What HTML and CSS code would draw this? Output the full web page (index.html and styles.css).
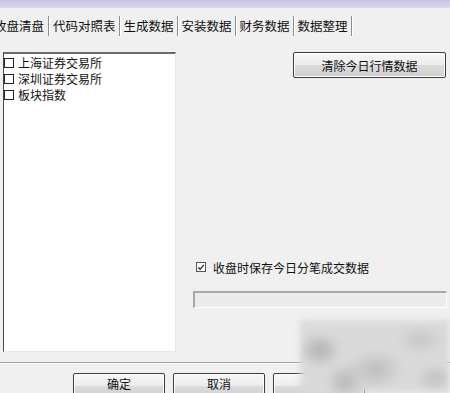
FILE: index.html
```html
<!DOCTYPE html>
<html lang="zh">
<head>
<meta charset="utf-8">
<link rel="stylesheet" href="styles.css">
</head>
<body>
<div class="window">
  <div class="titlebar"></div>
  <div class="tabbar">
    <span class="tab first">收盘清盘</span>
    <span class="tab">代码对照表</span>
    <span class="tab">生成数据</span>
    <span class="tab">安装数据</span>
    <span class="tab">财务数据</span>
    <span class="tab">数据整理</span>
  </div>
  <div class="panel">
    <div class="list">
      <div class="item"><span class="box"></span>上海证券交易所</div>
      <div class="item"><span class="box"></span>深圳证券交易所</div>
      <div class="item"><span class="box"></span>板块指数</div>
    </div>
    <div class="right">
      <button class="btn clear">清除今日行情数据</button>
      <label class="check"><span class="box checked"><svg width="9" height="9" viewBox="0 0 9 9"><path d="M1.5 4.5 L3.5 6.5 L7.5 1.5" fill="none" stroke="#222" stroke-width="1.4"/></svg></span>收盘时保存今日分笔成交数据</label>
      <div class="progress"></div>
    </div>
  </div>
  <div class="footer">
    <button class="btn foot">确定</button>
    <button class="btn foot">取消</button>
    <button class="btn foot"></button>
  </div>
  <div class="blur"></div>
</div>
</body>
</html>
```
FILE: styles.css
```css
* { box-sizing: border-box; }
html, body { margin: 0; padding: 0; }
body { background: #f0f0f0; }
.window {
  position: relative;
  width: 450px;
  height: 393px;
  overflow: hidden;
  background: #f0f0f0;
  font-family: "Noto Sans CJK SC", "Noto Sans", sans-serif;
  font-size: 12px;
  color: #111;
}
.titlebar {
  height: 8px;
  background: linear-gradient(#c9c3e2, #dcd8ee);
}
.tabbar {
  display: flex;
  align-items: center;
  height: 30px;
  margin-left: -6px;
  padding-top: 6px;
  font-size: 12.5px;
}
.tab {
  line-height: 20px;
  padding: 0 3px 0 4px;
  border-right: 1px solid #8e8e8e;
  box-shadow: 1px 0 0 #ffffff;
  white-space: nowrap;
}
.tab.first { padding-left: 0; padding-right: 4px; }
.panel {
  display: flex;
  height: 325px;
  padding: 14px 0 0 3px;
  border-bottom: 1px solid #a0a0a0;
  box-shadow: 0 1px 0 #ffffff;
}
.list {
  width: 173px;
  height: 300px;
  background: #ffffff;
  border-top: 2px solid #6a6a6a;
  border-left: 1px solid #4a4a4a;
  border-right: 1px solid #e6e6e6;
  border-bottom: 1px solid #e6e6e6;
  padding-top: 1px;
}
.item {
  display: flex;
  align-items: center;
  height: 16px;
  line-height: 16px;
  white-space: nowrap;
}
.box {
  display: inline-flex;
  align-items: center;
  justify-content: center;
  width: 10px;
  height: 10px;
  border: 1px solid #222;
  background: #fff;
  margin: 0 4px 0 0;
  flex: none;
}
.right {
  display: flex;
  flex-direction: column;
  margin-left: 17px;
  width: 254px;
}
.btn {
  font-family: inherit;
  font-size: 12px;
  color: #111;
  border: 1px solid #3c3c3c;
  border-radius: 2px;
  background: linear-gradient(#f7f7f7 0%, #ececec 50%, #dcdcdc 51%, #cfcfcf 100%);
  box-shadow: inset 0 0 0 1px #ffffff;
  padding: 0;
}
.clear {
  align-self: flex-end;
  width: 153px;
  height: 26px;
  margin-right: 1px;
}
.check {
  display: flex;
  align-items: center;
  margin-top: 182px;
  padding-left: 3px;
  height: 14px;
  white-space: nowrap;
}
.check .box {
  border-color: #555;
  margin-right: 7px;
}
.progress {
  margin-top: 17px;
  height: 17px;
  border-top: 2px solid #a8a8a8;
  border-left: 2px solid #a8a8a8;
  border-right: 1px solid #ffffff;
  border-bottom: 1px solid #ffffff;
  background: #ececec;
}
.footer {
  display: flex;
  gap: 8px;
  padding: 10px 0 0 73px;
}
.foot {
  width: 92px;
  height: 26px;
  line-height: 20px;
  padding-bottom: 4px;
}
.blur {
  position: absolute;
  left: 300px;
  top: 320px;
  width: 150px;
  height: 73px;
  background:
    radial-gradient(ellipse 22px 18px at 20px 30px, #b0b0b0, transparent),
    radial-gradient(ellipse 30px 20px at 75px 50px, #bdbdbd, transparent),
    radial-gradient(ellipse 25px 16px at 120px 20px, #c6c6c6, transparent),
    radial-gradient(ellipse 20px 20px at 45px 62px, #b8b8b8, transparent),
    radial-gradient(ellipse 20px 14px at 135px 58px, #c0c0c0, transparent),
    #dadada;
  filter: blur(3px);
}
```
